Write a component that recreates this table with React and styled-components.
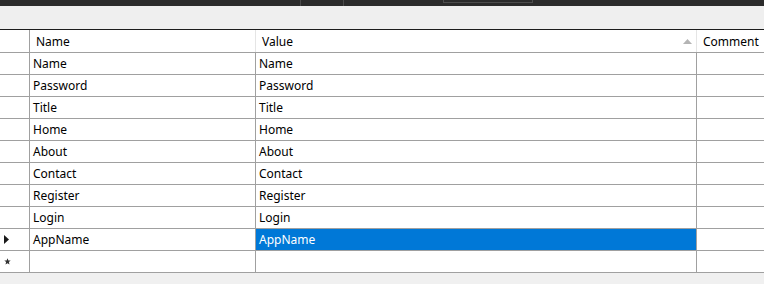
import React from "react";
import styled, { createGlobalStyle } from "styled-components";

const Global = createGlobalStyle`
  html, body { margin: 0; padding: 0; background: #f0f0f0; }
  body { font-family: "Noto Sans", "Open Sans", sans-serif; font-size: 12px; color: #000; }
  #root { width: 764px; height: 284px; overflow: hidden; }
`;

const Page = styled.div`
  width: 764px;
  height: 284px;
  display: flex;
  flex-direction: column;
  background: #f0f0f0;
  overflow: hidden;
`;

const TitleStrip = styled.div`
  height: 6px;
  background: #2b2b2b;
  display: flex;
  align-items: flex-start;
  flex-shrink: 0;
`;

const StripDivider = styled.div`
  width: 1px;
  height: 6px;
  background: #4a4a4a;
  margin-left: ${(p) => p.$gap}px;
`;

const StripBox = styled.div`
  width: 88px;
  height: 2px;
  border: 1px solid #4d4d4d;
  border-top: none;
  margin-left: ${(p) => p.$gap}px;
`;

const Toolbar = styled.div`
  height: 23px;
  background: #efefef;
  flex-shrink: 0;
`;

const Grid = styled.div`
  border-top: 1px solid #1c1c1c;
  background: #fff;
  flex-shrink: 0;
`;

const Row = styled.div`
  display: flex;
  height: ${(p) => (p.$header ? 22 : 21)}px;
  border-bottom: 1px solid #a0a0a0;
`;

const Cell = styled.div`
  box-sizing: border-box;
  width: ${(p) => p.$w}px;
  flex: ${(p) => (p.$w ? "none" : "1")};
  border-right: ${(p) => (p.$last ? "none" : `1px solid ${p.$header ? "#e5e5e5" : "#a0a0a0"}`)};
  display: flex;
  align-items: center;
  padding-left: ${(p) => (p.$header ? 6 : 3)}px;
  padding-top: ${(p) => (p.$header ? 1 : 0)}px;
  background: ${(p) => (p.$selected ? "#0078d7" : "#fff")};
  color: ${(p) => (p.$selected ? "#fff" : "#000")};
  white-space: nowrap;
  overflow: hidden;
  position: relative;
`;

const RowHead = styled.div`
  box-sizing: border-box;
  width: 30px;
  flex: none;
  border-right: 1px solid #a0a0a0;
  display: flex;
  align-items: center;
  padding-left: 4px;
`;

const SortGlyph = styled.svg`
  position: absolute;
  right: 4px;
  top: 9px;
`;

const rows = ["Name", "Password", "Title", "Home", "About", "Contact", "Register", "Login", "AppName"];

const Arrow = () => (
  <svg width="6" height="9" viewBox="0 0 6 9">
    <path d="M0 0 L5 4.5 L0 9 Z" fill="#1a1a1a" />
  </svg>
);

const Star = () => (
  <svg width="7" height="7" viewBox="0 0 7 7">
    <path d="M3.5 0.3 L4.4 2.5 L6.7 2.6 L4.9 4.1 L5.5 6.5 L3.5 5.2 L1.5 6.5 L2.1 4.1 L0.3 2.6 L2.6 2.5 Z" fill="#333" />
  </svg>
);

export default function App() {
  return (
    <Page>
      <Global />
      <TitleStrip>
        <StripDivider $gap={300} />
        <StripDivider $gap={42} />
        <StripBox $gap={99} />
      </TitleStrip>
      <Toolbar />
      <Grid>
        <Row $header>
          <RowHead />
          <Cell $header $w={226}>Name</Cell>
          <Cell $header $w={441}>
            Value
            <SortGlyph width="9" height="5" viewBox="0 0 9 5">
              <path d="M0 5 L4.5 0 L9 5 Z" fill="#b4b4b4" />
            </SortGlyph>
          </Cell>
          <Cell $header $last>Comment</Cell>
        </Row>
        {rows.map((r, i) => (
          <Row key={r}>
            <RowHead>{i === rows.length - 1 ? <Arrow /> : null}</RowHead>
            <Cell $w={226}>{r}</Cell>
            <Cell $w={441} $selected={i === rows.length - 1}>{r}</Cell>
            <Cell $last />
          </Row>
        ))}
        <Row>
          <RowHead><Star /></RowHead>
          <Cell $w={226} />
          <Cell $w={441} />
          <Cell $last />
        </Row>
      </Grid>
    </Page>
  );
}
